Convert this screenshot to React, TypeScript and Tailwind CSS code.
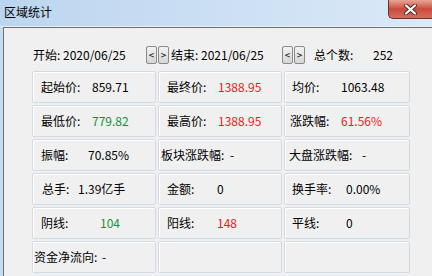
import React from "react";

type Cell = {
  label: string;
  value?: string;
  tone?: "red" | "green";
  lx: string;
  lw: string;
};

const rows: Cell[][] = [
  [
    { label: "起始价:", value: "859.71", lx: "pl-[8px]", lw: "w-[51px]" },
    { label: "最终价:", value: "1388.95", tone: "red", lx: "pl-[8px]", lw: "w-[51px]" },
    { label: "均价:", value: "1063.48", lx: "pl-[7px]", lw: "w-[49px]" },
  ],
  [
    { label: "最低价:", value: "779.82", tone: "green", lx: "pl-[8px]", lw: "w-[51px]" },
    { label: "最高价:", value: "1388.95", tone: "red", lx: "pl-[8px]", lw: "w-[51px]" },
    { label: "涨跌幅:", value: "61.56%", tone: "red", lx: "pl-[5px]", lw: "w-[51px]" },
  ],
  [
    { label: "振幅:", value: "70.85%", lx: "pl-[8px]", lw: "w-[47px]" },
    { label: "板块涨跌幅:", value: "-", lx: "pl-[2px]", lw: "w-[69px]" },
    { label: "大盘涨跌幅:", value: "-", lx: "pl-[4px]", lw: "w-[73px]" },
  ],
  [
    { label: "总手:", value: "1.39亿手", lx: "pl-[9px]", lw: "w-[36px]" },
    { label: "金额:", value: "0", lx: "pl-[8px]", lw: "w-[50px]" },
    { label: "换手率:", value: "0.00%", lx: "pl-[7px]", lw: "w-[54px]" },
  ],
  [
    { label: "阴线:", value: "104", tone: "green", lx: "pl-[8px]", lw: "w-[59px]" },
    { label: "阳线:", value: "148", tone: "red", lx: "pl-[8px]", lw: "w-[50px]" },
    { label: "平线:", value: "0", lx: "pl-[7px]", lw: "w-[54px]" },
  ],
  [
    { label: "资金净流向:", value: "-", lx: "pl-[1px]", lw: "w-[68px]" },
    { label: "", lx: "pl-[8px]", lw: "w-[50px]" },
    { label: "", lx: "pl-[7px]", lw: "w-[50px]" },
  ],
];

const StepButton: React.FC<{ text: string }> = ({ text }) => (
  <div className="w-[11px] h-[18px] flex items-center justify-center rounded-[2px] border border-[#8a8a8a] bg-gradient-to-b from-[#f2f2f2] to-[#d6d6d6] text-[10px] leading-none text-black">
    {text}
  </div>
);

export default function App() {
  return (
    <div
      className="w-[432px] h-[276px] overflow-hidden flex flex-col bg-[#f0f0f0] text-[12px] text-black"
      style={{ fontFamily: '"Noto Sans CJK SC", "Liberation Sans", sans-serif' }}
    >
      {/* title bar */}
      <div className="h-[27px] shrink-0 flex items-start justify-between bg-gradient-to-r from-[#bcd5ef] to-[#dbe9f8] border-b border-[#e8f0f8]">
        <span className="pl-[4px] pt-[4px] leading-[16px]">区域统计</span>
        <div className="w-[44px] h-[19px] flex items-center justify-center rounded-bl-[5px] border border-t-0 border-r-0 border-[#6b3028] bg-gradient-to-b from-[#e9a596] via-[#c94a3c] to-[#d46d5f]">
          <svg width="13" height="11" viewBox="0 0 13 11">
            <path
              d="M2 1.5 L11 9.5 M11 1.5 L2 9.5"
              stroke="#4a2a26"
              strokeWidth="4"
              strokeLinecap="round"
            />
            <path
              d="M2 1.5 L11 9.5 M11 1.5 L2 9.5"
              stroke="#ffffff"
              strokeWidth="2.2"
              strokeLinecap="round"
            />
          </svg>
        </div>
      </div>

      <div className="flex flex-1 min-h-0">
        <div className="w-[3px] shrink-0 bg-[#c6dbf1]" />
        <div className="flex-1 border-l border-t border-[#6e6e6e] flex flex-col">
          {/* date range header */}
          <div className="mt-[18px] h-[18px] flex items-center pl-[29px] whitespace-nowrap">
            <span className="w-[113px]">开始: 2020/06/25</span>
            <StepButton text="<" />
            <div className="w-[1px]" />
            <StepButton text=">" />
            <span className="pl-[2px] w-[113px]">结束: 2021/06/25</span>
            <StepButton text="<" />
            <div className="w-[1px]" />
            <StepButton text=">" />
            <span className="pl-[9px] w-[68px]">总个数:</span>
            <span>252</span>
          </div>

          {/* stats grid */}
          <div className="mt-[7px] ml-[28px] grid grid-cols-[124px_124px_126px] auto-rows-[32px] gap-[2px]">
            {rows.flat().map((c, i) => (
              <div
                key={i}
                className={`flex items-center whitespace-nowrap rounded-[2px] border border-[#d2dbe5] shadow-[inset_1px_1px_0_#ffffff] ${c.lx}`}
              >
                <span className={`shrink-0 ${c.lw}`}>{c.label}</span>
                {c.value && (
                  <span
                    className={
                      c.tone === "red"
                        ? "text-[#f01818]"
                        : c.tone === "green"
                          ? "text-[#14903a]"
                          : ""
                    }
                  >
                    {c.value}
                  </span>
                )}
              </div>
            ))}
          </div>
        </div>
      </div>
    </div>
  );
}
